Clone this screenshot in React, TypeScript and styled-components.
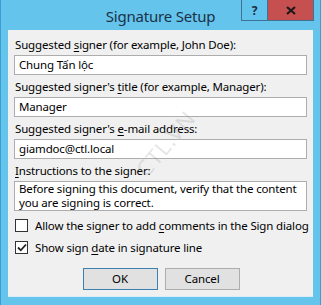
import React from "react";
import styled, { createGlobalStyle } from "styled-components";

const GlobalStyle = createGlobalStyle`
  html, body {
    margin: 0;
    padding: 0;
    background: #62c3ec;
  }
  * {
    box-sizing: border-box;
  }
`;

const Window = styled.div`
  position: relative;
  width: 321px;
  height: 305px;
  background: #64c4ec;
  border-left: 1px solid #3a9fd0;
  border-right: 1px solid #3a9fd0;
  display: flex;
  flex-direction: column;
  font-family: "Noto Sans", "Open Sans", sans-serif;
  font-size: 11.5px;
  letter-spacing: -0.15px;
  color: #000;
  overflow: hidden;
`;

const TitleBar = styled.div`
  position: relative;
  height: 30px;
  flex: none;
  display: flex;
  align-items: center;
  justify-content: center;
`;

const Title = styled.div`
  font-size: 15px;
  color: #1b3147;
  padding-top: 1px;
  letter-spacing: -0.2px;
`;

const Controls = styled.div`
  position: absolute;
  top: 0;
  right: 6px;
  display: flex;
`;

const CtrlButton = styled.div<{ $close?: boolean }>`
  width: ${(p) => (p.$close ? 46 : 27)}px;
  height: 21px;
  display: flex;
  align-items: center;
  justify-content: center;
  background: ${(p) => (p.$close ? "#c6504f" : "#62c3ec")};
  border: 1px solid #3f7395;
  border-top: none;
  border-left-width: ${(p) => (p.$close ? 0 : 1)}px;
  font-weight: 700;
  font-size: 12px;
  color: #1a2a40;
`;

const Panel = styled.div`
  position: relative;
  margin: 0 7px;
  height: 267px;
  flex: none;
  background: #f0f0f0;
  padding: 7px 6px 0 6px;
  display: flex;
  flex-direction: column;
  border-bottom: 1px solid #d9eef8;
`;

const Label = styled.div<{ $first?: boolean }>`
  height: 16px;
  line-height: 16px;
  margin-top: ${(p) => (p.$first ? 0 : 4)}px;
  margin-bottom: 2px;
  padding-left: 1px;
  white-space: nowrap;
`;

const Key = styled.span`
  text-decoration: underline;
  text-underline-offset: 2px;
`;

const Field = styled.div`
  height: 20px;
  background: #fff;
  border: 1px solid #adadad;
  padding: 0 4px;
  line-height: 18px;
  white-space: nowrap;
`;

const Area = styled.div`
  height: 30px;
  background: #fff;
  border: 1px solid #adadad;
  padding: 0 4px;
  line-height: 13.5px;
`;

const CheckRow = styled.label<{ $top: number }>`
  display: flex;
  align-items: center;
  gap: 7px;
  margin-top: ${(p) => p.$top}px;
  margin-left: 1px;
  height: 14px;
  white-space: nowrap;
`;

const Box = styled.span`
  width: 13px;
  height: 13px;
  flex: none;
  background: #fff;
  border: 1px solid #333;
  display: flex;
  align-items: center;
  justify-content: center;
`;

const Buttons = styled.div`
  display: flex;
  justify-content: center;
  gap: 7px;
  margin-top: 14px;
  padding-left: 1px;
`;

const Button = styled.div<{ $default?: boolean }>`
  width: 75px;
  height: 22px;
  background: #e1e1e1;
  border: 1px solid ${(p) => (p.$default ? "#3c7fb1" : "#adadad")};
  display: flex;
  align-items: center;
  justify-content: center;
  padding-bottom: 1px;
`;

const Watermark = styled.div`
  position: absolute;
  left: 118px;
  top: 98px;
  font-size: 22px;
  color: rgba(140, 140, 140, 0.22);
  transform: rotate(-50deg);
  letter-spacing: 1px;
  pointer-events: none;
`;

export default function App() {
  return (
    <>
      <GlobalStyle />
      <Window>
        <TitleBar>
          <Title>Signature Setup</Title>
          <Controls>
            <CtrlButton>?</CtrlButton>
            <CtrlButton $close>
              <svg width="10" height="9" viewBox="0 0 10 9">
                <path d="M1 1 L9 8 M9 1 L1 8" stroke="#1a1a1a" strokeWidth="2.2" />
              </svg>
            </CtrlButton>
          </Controls>
        </TitleBar>
        <Panel>
          <Label $first>
            Suggested <Key>s</Key>igner (for example, John Doe):
          </Label>
          <Field>Chung Tấn lộc</Field>
          <Label>
            Suggested signer's <Key>t</Key>itle (for example, Manager):
          </Label>
          <Field>Manager</Field>
          <Label>
            Suggested signer's <Key>e</Key>-mail address:
          </Label>
          <Field>giamdoc@ctl.local</Field>
          <Label>
            <Key>I</Key>nstructions to the signer:
          </Label>
          <Area>
            Before signing this document, verify that the content you are signing is correct.
          </Area>
          <CheckRow $top={7}>
            <Box />
            <span>
              Allow the signer to add <Key>c</Key>omments in the Sign dialog
            </span>
          </CheckRow>
          <CheckRow $top={8}>
            <Box>
              <svg width="10" height="9" viewBox="0 0 10 9">
                <path d="M1 4.5 L3.8 7.3 L9 1.5" fill="none" stroke="#222" strokeWidth="1.8" />
              </svg>
            </Box>
            <span>
              Show sign <Key>d</Key>ate in signature line
            </span>
          </CheckRow>
          <Buttons>
            <Button $default>OK</Button>
            <Button>Cancel</Button>
          </Buttons>
          <Watermark>CTL.VN</Watermark>
        </Panel>
      </Window>
    </>
  );
}
